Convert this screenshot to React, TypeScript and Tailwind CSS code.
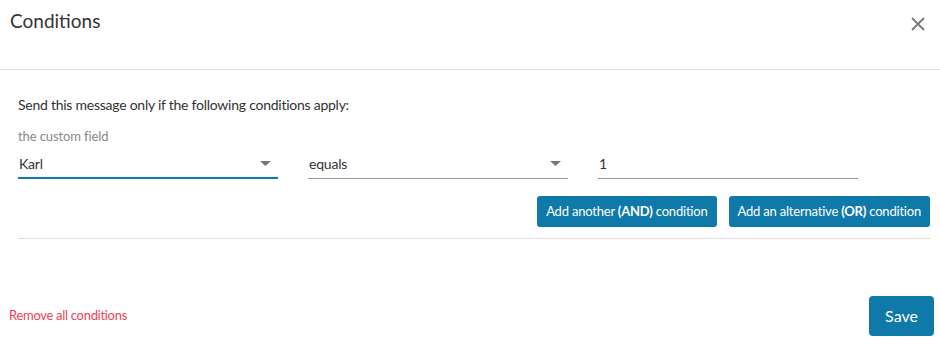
const font = { fontFamily: "Lato, 'Noto Sans', sans-serif" };

function Caret() {
  return (
    <svg width="11" height="5" viewBox="0 0 11 5" className="shrink-0">
      <path d="M0 0h11L5.5 5z" fill="#777" />
    </svg>
  );
}

function SelectField({ value, active }: { value: string; active?: boolean }) {
  return (
    <div
      className={`flex h-[33px] w-[260px] items-center justify-between pl-px pr-[7px] pt-[3px] ${
        active ? "border-b-2 border-[#0f7aa9]" : "border-b border-[#999] pb-px"
      }`}
    >
      <span className="text-[14px] tracking-[-0.2px] text-[#333]">{value}</span>
      <Caret />
    </div>
  );
}

export default function App() {
  return (
    <div className="h-[337px] w-[940px] overflow-hidden bg-white" style={font}>
      <div className="flex h-[70px] items-start justify-between border-b border-[#ddd] pl-[10px] pr-[15px] pt-[7px]">
        <h1 className="text-[19px] leading-[28px] text-[#333]">Conditions</h1>
        <button className="mt-[10px] text-[#777]" aria-label="Close">
          <svg width="14" height="14" viewBox="0 0 14 14">
            <path d="M1 1l12 12M13 1L1 13" stroke="currentColor" strokeWidth="1.8" />
          </svg>
        </button>
      </div>

      <div className="ml-[18px] mr-[10px] border-b border-[#ddd] pt-[25px] pb-[11px]">
        <p className="text-[14px] leading-[20px] tracking-[-0.25px] text-[#333]">
          Send this message only if the following conditions apply:
        </p>
        <p className="mt-[12px] text-[13px] leading-[18px] tracking-[-0.1px] text-[#888]">
          the custom field
        </p>
        <div className="mt-[1px] flex gap-[30px]">
          <SelectField value="Karl" active />
          <SelectField value="equals" />
          <div className="flex h-[33px] w-[260px] items-center border-b border-[#999] pb-px pl-px pt-[3px]">
            <span className="text-[14px] text-[#333]">1</span>
          </div>
        </div>
        <div className="mt-[17px] flex justify-end gap-[12px]">
          <button className="h-[31px] rounded-[3px] bg-[#0f7aa9] px-[9px] text-[13px] tracking-[-0.2px] text-white">
            Add another <b>(AND)</b> condition
          </button>
          <button className="h-[31px] rounded-[3px] bg-[#0f7aa9] px-[9px] text-[13px] tracking-[-0.2px] text-white">
            Add an alternative <b>(OR)</b> condition
          </button>
        </div>
      </div>

      <div className="flex items-center justify-between pl-[9px] pr-[6px] pt-[57px]">
        <a className="-mt-[1px] text-[13px] tracking-[-0.3px] text-[#ee4257]">Remove all conditions</a>
        <button className="h-[40px] w-[65px] rounded-[4px] bg-[#0f7aa9] text-[16px] text-white">
          Save
        </button>
      </div>
    </div>
  );
}
